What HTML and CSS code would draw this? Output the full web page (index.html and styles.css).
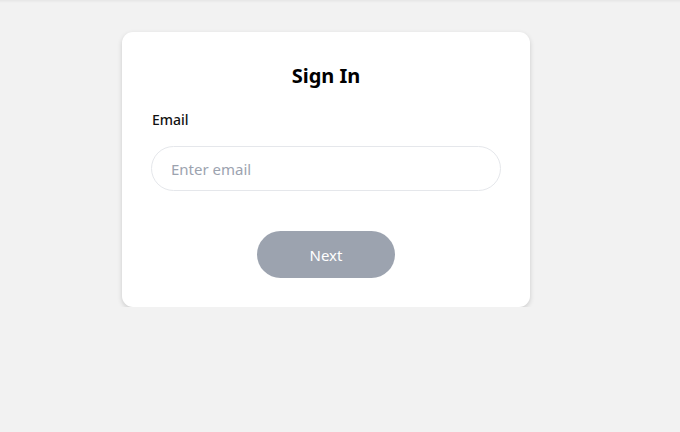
FILE: index.html
```html
<!DOCTYPE html>
<html lang="en">
<head>
<meta charset="utf-8">
<title>Sign In</title>
<link rel="stylesheet" href="styles.css">
</head>
<body>
<div class="topbar"></div>
<main class="page">
  <form class="card">
    <h1 class="title">Sign In</h1>
    <label class="label" for="email">Email</label>
    <input class="input" id="email" type="email" placeholder="Enter email">
    <div class="actions">
      <button class="btn" type="button">Next</button>
    </div>
  </form>
</main>
</body>
</html>
```
FILE: styles.css
```css
* { box-sizing: border-box; }
html, body {
  margin: 0;
  padding: 0;
  background: #f2f2f2;
  font-family: "Noto Sans", "DejaVu Sans", sans-serif;
  color: #111;
}
.topbar {
  height: 3px;
  background: linear-gradient(#e6e6e6, #f2f2f2);
}
.page {
  padding: 29px 0 0 122px;
}
.card {
  width: 408px;
  background: #fff;
  border-radius: 11px;
  padding: 30px 29px 29px 29px;
  box-shadow: 0 2px 5px rgba(0,0,0,0.16);
  display: flex;
  flex-direction: column;
}
.title {
  margin: 0;
  font-size: 20px;
  line-height: 28px;
  font-weight: 700;
  text-align: center;
  color: #000;
}
.label {
  margin-top: 20px;
  font-size: 14px;
  line-height: 20px;
  font-weight: 500;
  padding-left: 1px;
  color: #111;
}
.input {
  margin-top: 16px;
  height: 45px;
  width: 100%;
  border: 1px solid #e5e7eb;
  border-radius: 999px;
  padding: 0 19px;
  font-family: inherit;
  font-size: 15px;
  color: #111;
  background: #fff;
  outline: none;
}
.input::placeholder { color: #9ca3af; }
.actions {
  margin-top: 40px;
  display: flex;
  justify-content: center;
}
.btn {
  width: 138px;
  height: 47px;
  border: none;
  border-radius: 999px;
  background: #9ca3af;
  color: #fff;
  font-family: inherit;
  font-size: 15px;
}
```
